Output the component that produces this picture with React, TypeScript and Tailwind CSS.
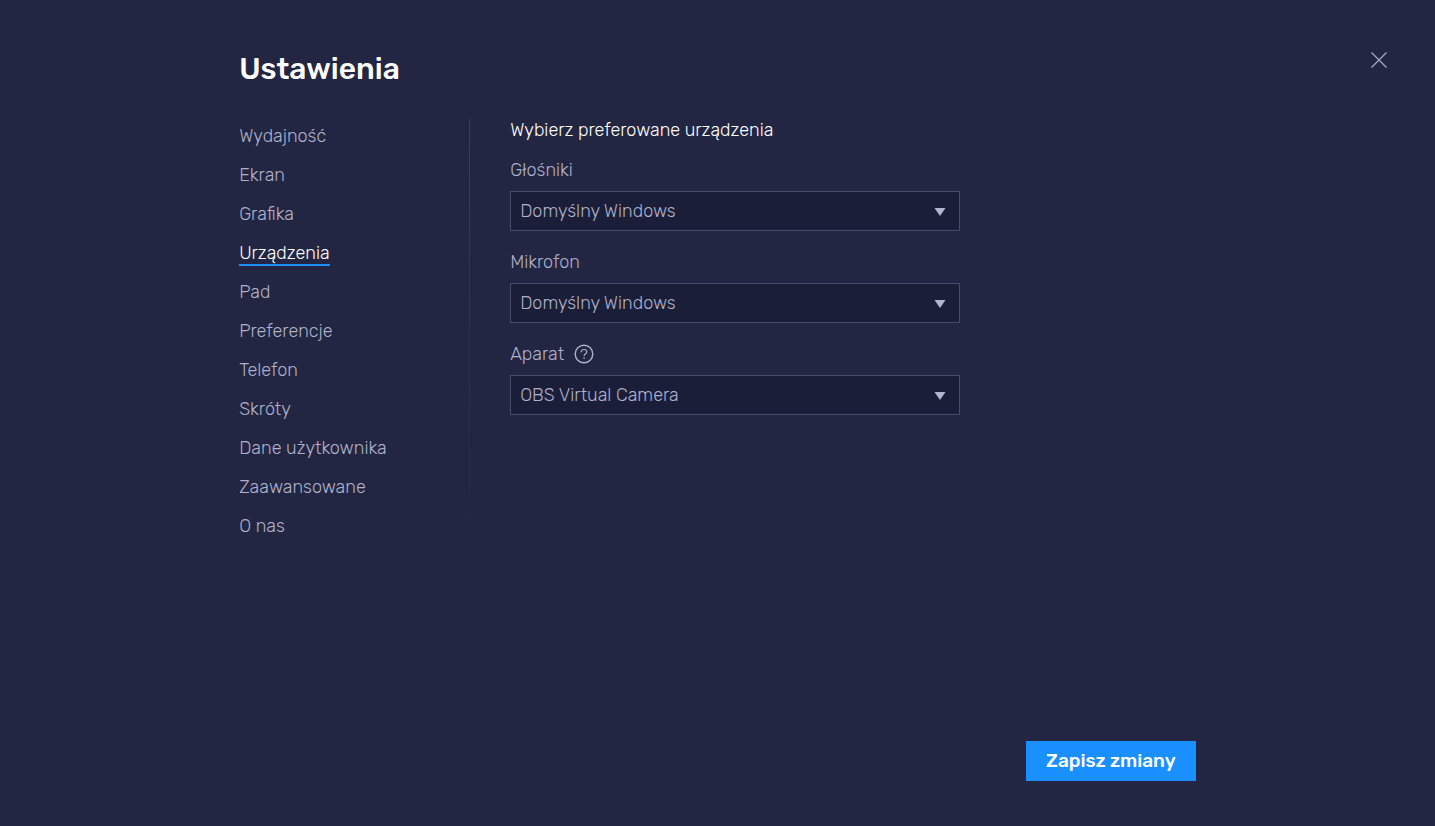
import { useState } from "react";

const sections = [
  "Wydajność",
  "Ekran",
  "Grafika",
  "Urządzenia",
  "Pad",
  "Preferencje",
  "Telefon",
  "Skróty",
  "Dane użytkownika",
  "Zaawansowane",
  "O nas",
];

interface DeviceFieldProps {
  id: string;
  label: string;
  options: string[];
  help?: boolean;
}

function DeviceField({ id, label, options, help = false }: DeviceFieldProps) {
  return (
    <div>
      <div className="flex h-[22px] items-center gap-2.5">
        <label htmlFor={id}>{label}</label>
        {help && (
          <button type="button" aria-label="Pomoc" className="cursor-pointer">
            <svg width="20" height="20" viewBox="0 0 20 20" fill="none" stroke="currentColor">
              <circle cx="10" cy="10" r="8.8" strokeWidth="1.4" />
              <path d="M7.2 8.2C7.2 6.5 8.4 5.5 10 5.5s2.8 1 2.8 2.4c0 2-2.7 1.9-2.7 4" strokeWidth="1.2" />
              <path d="M10.1 13.2v1.5" strokeWidth="1.4" />
            </svg>
          </button>
        )}
      </div>
      <div className="relative mt-2.5">
        <select
          id={id}
          className="h-10 w-full appearance-none border border-[#474a6b] bg-[#1b1e38] pl-[9px] pr-8 font-[340] outline-none focus-visible:border-[#1a8fff]"
        >
          {options.map((option) => (
            <option key={option}>{option}</option>
          ))}
        </select>
        <svg
          className="pointer-events-none absolute right-3.5 top-4 fill-[#b3b5d0]"
          width="12"
          height="10"
          viewBox="0 0 12 10"
        >
          <path d="M.5 1h11L6 9z" />
        </svg>
      </div>
    </div>
  );
}

export default function App() {
  const [active, setActive] = useState("Urządzenia");

  return (
    <div className="relative flex min-h-screen flex-col bg-[#232642] font-[Rubik,Roboto,sans-serif] text-[18px] font-[340] leading-6 text-[#afb1ca]">
      <button type="button" aria-label="Zamknij" className="absolute right-12 top-[52px] cursor-pointer">
        <svg width="16" height="16" viewBox="0 0 16 16" fill="none" stroke="#a9abc6" strokeWidth="1.2">
          <path d="M.5.5l15 15M15.5.5l-15 15" />
        </svg>
      </button>

      <div className="mx-auto flex w-2/3 flex-1 flex-col pb-[45px] pt-12">
        <h1 className="text-[30px] font-medium leading-[42px] text-white">Ustawienia</h1>

        <div className="mt-[29px] flex items-start">
          <nav className="w-[230px] shrink-0 pt-[5px]">
            <ul className="flex flex-col gap-3.5">
              {sections.map((name) => (
                <li key={name} className="flex h-[25px]">
                  <a
                    href="#"
                    onClick={() => setActive(name)}
                    className={
                      name === active
                        ? "border-b-2 border-[#1a8fff] text-white"
                        : "border-b-2 border-transparent hover:text-white"
                    }
                  >
                    {name}
                  </a>
                </li>
              ))}
            </ul>
          </nav>

          <div className="h-[420px] w-px shrink-0 bg-linear-to-b from-[#3b3e5c] to-[#232642]" />

          <main className="ml-10 w-[450px]">
            <h2 className="leading-[22px] text-white">Wybierz preferowane urządzenia</h2>
            <form className="mt-[18px] flex flex-col gap-5">
              <DeviceField id="speakers" label="Głośniki" options={["Domyślny Windows"]} />
              <DeviceField id="microphone" label="Mikrofon" options={["Domyślny Windows"]} />
              <DeviceField id="camera" label="Aparat" options={["OBS Virtual Camera"]} help />
            </form>
          </main>
        </div>

        <div className="mt-auto flex justify-end">
          <button
            type="button"
            className="h-10 w-[170px] cursor-pointer bg-[#1a8fff] text-[19px] font-medium text-white hover:bg-[#3a9fff]"
          >
            Zapisz zmiany
          </button>
        </div>
      </div>
    </div>
  );
}
